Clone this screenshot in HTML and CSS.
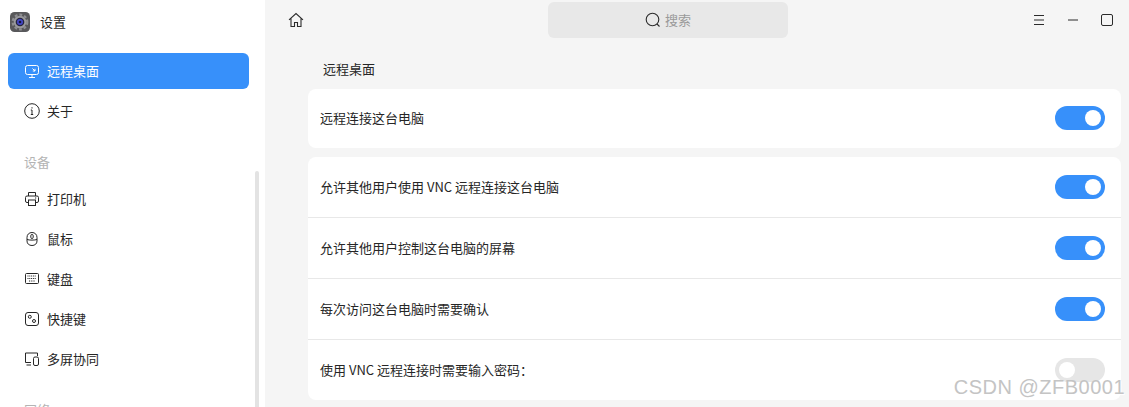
FILE: index.html
```html
<!DOCTYPE html>
<html lang="zh">

<head>
    <meta charset="UTF-8">
    <meta name="viewport" content="width=device-width, initial-scale=1.0">
    <title>设置</title>
    <link rel="stylesheet" href="styles.css">
</head>

<body>
    <div class="window">
        <div class="sidebar">
            <div class="app-title">
                <svg class="app-icon" width="20" height="20" viewBox="0 0 20 20">
                    <rect width="20" height="20" rx="4.500" fill="#59595b"/>
                    <circle cx="10" cy="10" r="7.300" fill="none" stroke="#8f8f92" stroke-width="2.200" stroke-dasharray="2.800 2"/>
                    <circle cx="10" cy="10" r="6.300" fill="#99999c"/>
                    <circle cx="10" cy="10" r="4.300" fill="#23233f"/>
                    <circle cx="10" cy="10" r="3" fill="#4347c8"/>
                    <circle cx="10" cy="10" r="1.300" fill="#15153a"/>
                </svg>
                <span>设置</span>
            </div>
            <div class="nav-list">
                <div class="nav-item active">
                    <svg class="nav-icon" viewBox="0 0 16 16">
                        <rect x="1.500" y="2.500" width="13" height="9" rx="2"/>
                        <path d="M5 14.500h6M8 11.500v3M8.500 5.500l2.500 2.500M11 5.800V8H8.800"/>
                    </svg>
                    <span>远程桌面</span>
                </div>
                <div class="nav-item">
                    <svg class="nav-icon" viewBox="0 0 16 16">
                        <circle cx="8" cy="8" r="7.300"/>
                        <path d="M8 7v4.500M6.800 11.500h2.400M6.800 7H8M8 4.200v1.300"/>
                    </svg>
                    <span>关于</span>
                </div>
                <div class="nav-group">设备</div>
                <div class="nav-item">
                    <svg class="nav-icon" viewBox="0 0 16 16">
                        <path d="M4.500 5V1.500h7V5M4.500 11.500H3A1.500 1.500 0 0 1 1.500 10V6.500A1.500 1.500 0 0 1 3 5h10a1.500 1.500 0 0 1 1.500 1.500V10a1.500 1.500 0 0 1-1.500 1.500h-1.500"/>
                        <rect x="4.500" y="9" width="7" height="5.500"/>
                        <path d="M11 7h1.200"/>
                    </svg>
                    <span>打印机</span>
                </div>
                <div class="nav-item">
                    <svg class="nav-icon" viewBox="0 0 16 16">
                        <path d="M8 1.500c-3 0-5 2-5 5v3.500c0 2.700 2 4.500 5 4.500s5-1.800 5-4.500V6.500c0-3-2-5-5-5z"/>
                        <path d="M3 8.500c2 .8 8 .8 10 0"/>
                        <rect x="6.800" y="3.500" width="2.400" height="4" rx="1.200"/>
                    </svg>
                    <span>鼠标</span>
                </div>
                <div class="nav-item">
                    <svg class="nav-icon" viewBox="0 0 16 16">
                        <rect x="1.500" y="2.500" width="13" height="10" rx="1"/>
                        <path class="dots" d="M3.500 5h9M3.500 7.500h9M5 10h6"/>
                    </svg>
                    <span>键盘</span>
                </div>
                <div class="nav-item">
                    <svg class="nav-icon" viewBox="0 0 16 16">
                        <rect x="1.500" y="1.500" width="13" height="13" rx="2.500"/>
                        <circle cx="5.800" cy="5.800" r="1.500"/>
                        <circle cx="10" cy="10" r="1.500"/>
                    </svg>
                    <span>快捷键</span>
                </div>
                <div class="nav-item">
                    <svg class="nav-icon" viewBox="0 0 16 16">
                        <path d="M7 11.500H1.500V2h12v3"/>
                        <path d="M2.500 14H7"/>
                        <rect x="9.500" y="6" width="5" height="8.500" rx="1.500"/>
                    </svg>
                    <span>多屏协同</span>
                </div>
                <div class="nav-group">网络</div>
            </div>
            <div class="scrollbar"></div>
        </div>

        <div class="main">
            <div class="topbar">
                <div class="home-btn">
                    <svg class="bar-icon" viewBox="0 0 16 16">
                        <path d="M1 7.800L8 1.500l7 6.300M3 6.500v8h3.500v-4h3v4H13v-8"/>
                    </svg>
                </div>
                <div class="search">
                    <svg class="bar-icon" viewBox="0 0 16 16">
                        <circle cx="7.500" cy="7.500" r="6.300"/>
                        <path d="M12 12l2.500 2.500"/>
                    </svg>
                    <span>搜索</span>
                </div>
                <div class="win-btns">
                    <svg class="win-icon" viewBox="0 0 12 12"><path d="M1 1.500h10M1 6h10M1 10.500h10"/></svg>
                    <svg class="win-icon" viewBox="0 0 12 12"><path d="M1 6h10"/></svg>
                    <svg class="win-icon" viewBox="0 0 12 12"><rect x="0.500" y="0.500" width="11" height="11" rx="1.500"/></svg>
                </div>
            </div>

            <div class="content">
                <div class="section-title">远程桌面</div>
                <div class="card">
                    <div class="row single">
                        <span>远程连接这台电脑</span>
                        <div class="switch on"></div>
                    </div>
                </div>
                <div class="card">
                    <div class="row">
                        <span>允许其他用户使用 VNC 远程连接这台电脑</span>
                        <div class="switch on"></div>
                    </div>
                    <div class="row">
                        <span>允许其他用户控制这台电脑的屏幕</span>
                        <div class="switch on"></div>
                    </div>
                    <div class="row">
                        <span>每次访问这台电脑时需要确认</span>
                        <div class="switch on"></div>
                    </div>
                    <div class="row">
                        <span>使用 VNC 远程连接时需要输入密码：</span>
                        <div class="switch"></div>
                    </div>
                </div>
            </div>
        </div>
    </div>

    <div class="watermark">CSDN @ZFB0001</div>
</body>
</html>
```

FILE: styles.css
```css
html,
body {
    margin: 0;
    padding: 0;
    height: 100%;
    overflow: hidden;
}

body {
    font-family: "Noto Sans CJK SC", "Noto Sans", sans-serif;
    font-size: 13px;
    line-height: 20px;
    color: #262626;
    background: #f5f5f5;
}

.window {
    display: flex;
    height: 407px;
    overflow: hidden;
}

/* sidebar */
.sidebar {
    position: relative;
    flex: 0 0 265px;
    background: #fff;
    overflow: hidden;
}

.app-title {
    display: flex;
    align-items: center;
    gap: 10px;
    height: 20px;
    padding: 12px 0 0 10px;
}

.nav-list {
    display: flex;
    flex-direction: column;
    padding: 21px 16px 0 8px;
}

.nav-item {
    display: flex;
    align-items: center;
    gap: 7px;
    height: 36px;
    padding-left: 16px;
    margin-bottom: 4px;
    border-radius: 6px;
}

.nav-item.active {
    background: #3790fa;
    color: #fff;
}

.nav-icon {
    width: 16px;
    height: 16px;
    flex: none;
    fill: none;
    stroke: currentColor;
    stroke-width: 1;
}

.nav-icon .dots {
    stroke-dasharray: 1 0.800;
}

.nav-group {
    height: 20px;
    padding: 19px 0 0 16px;
    margin-bottom: 9px;
    flex: none;
    color: #b4b4b4;
}

.scrollbar {
    position: absolute;
    left: 255px;
    top: 171px;
    bottom: 0;
    width: 4px;
    border-radius: 2px 2px 0 0;
    background: #e3e3e3;
}

/* main area */
.main {
    flex: 1;
    min-width: 0;
}

.topbar {
    position: relative;
    display: flex;
    align-items: center;
    justify-content: space-between;
    height: 40px;
    padding: 0 16px 0 23px;
}

.bar-icon {
    display: block;
    width: 16px;
    height: 16px;
    fill: none;
    stroke: #2b2b2b;
    stroke-width: 1.100;
}

.search {
    position: absolute;
    left: 283px;
    top: 2px;
    display: flex;
    align-items: center;
    justify-content: center;
    gap: 4px;
    width: 240px;
    height: 36px;
    border-radius: 6px;
    background: #e8e8e8;
    color: #9a9a9a;
}

.win-btns {
    display: flex;
    align-items: center;
    gap: 22px;
}

.win-icon {
    display: block;
    width: 12px;
    height: 12px;
    fill: none;
    stroke: #2b2b2b;
    stroke-width: 1;
}

.content {
    padding: 0 8px 0 43px;
}

.section-title {
    height: 49px;
    padding-left: 15px;
    line-height: 58px;
}

.card {
    margin-bottom: 9px;
    border-radius: 8px;
    background: #fff;
}

.row {
    display: flex;
    align-items: center;
    justify-content: space-between;
    height: 60px;
    border-bottom: 1px solid #e8e8e8;
    padding: 0 16px 0 12px;
}

.row:last-child {
    border-bottom: 0;
}

.row.single {
    height: 58px;
    padding-bottom: 1px;
}

.switch {
    position: relative;
    width: 50px;
    height: 24px;
    border-radius: 12px;
    background: #e6e6e6;
}

.switch::after {
    content: "";
    position: absolute;
    left: 4px;
    top: 4px;
    width: 16px;
    height: 16px;
    border-radius: 50%;
    background: #fff;
}

.switch.on {
    background: #3790fa;
}

.switch.on::after {
    left: 30px;
}

.watermark {
    position: absolute;
    right: 4px;
    bottom: 6px;
    font-family: "Liberation Sans", sans-serif;
    font-size: 20px;
    line-height: 28px;
    letter-spacing: 0.5px;
    color: #c4c4c4;
    text-shadow: 1px 1px 1px #fff;
}
```
